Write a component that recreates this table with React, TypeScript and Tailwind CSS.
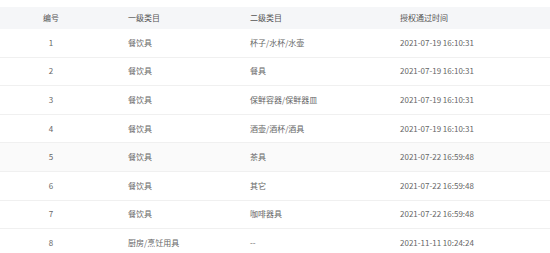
const ROWS = [
  { id: 1, first: "餐饮具", second: "杯子/水杯/水壶", time: "2021-07-19 16:10:31" },
  { id: 2, first: "餐饮具", second: "餐具", time: "2021-07-19 16:10:31" },
  { id: 3, first: "餐饮具", second: "保鲜容器/保鲜器皿", time: "2021-07-19 16:10:31" },
  { id: 4, first: "餐饮具", second: "酒壶/酒杯/酒具", time: "2021-07-19 16:10:31" },
  { id: 5, first: "餐饮具", second: "茶具", time: "2021-07-22 16:59:48" },
  { id: 6, first: "餐饮具", second: "其它", time: "2021-07-22 16:59:48" },
  { id: 7, first: "餐饮具", second: "咖啡器具", time: "2021-07-22 16:59:48" },
  { id: 8, first: "厨房/烹饪用具", second: "--", time: "2021-11-11 10:24:24" },
];

const GRID = "grid grid-cols-[102px_122px_150px_1fr] items-center";

export default function App() {
  return (
    <div
      className="h-[253px] w-[550px] overflow-hidden bg-white pt-[7px] text-[8px] text-[#666]"
      style={{ fontFamily: "'Noto Sans CJK SC', 'Noto Sans', sans-serif" }}
    >
      <div className={`${GRID} h-[22px] bg-[#f5f6f8] text-[#555]`}>
        <div className="text-center">编号</div>
        <div className="pl-[26px]">一级类目</div>
        <div className="pl-[26px]">二级类目</div>
        <div className="pl-[26px]">授权通过时间</div>
      </div>
      {ROWS.map((r) => (
        <div
          key={r.id}
          className={`${GRID} h-[28.6px] border-b border-[#f0f0f0] ${r.id === 5 ? "bg-[#fafafa]" : ""}`}
        >
          <div className="text-center">{r.id}</div>
          <div className="pl-[26px]">{r.first}</div>
          <div className="pl-[26px]">{r.second}</div>
          <div className="pl-[26px]">{r.time}</div>
        </div>
      ))}
    </div>
  );
}
